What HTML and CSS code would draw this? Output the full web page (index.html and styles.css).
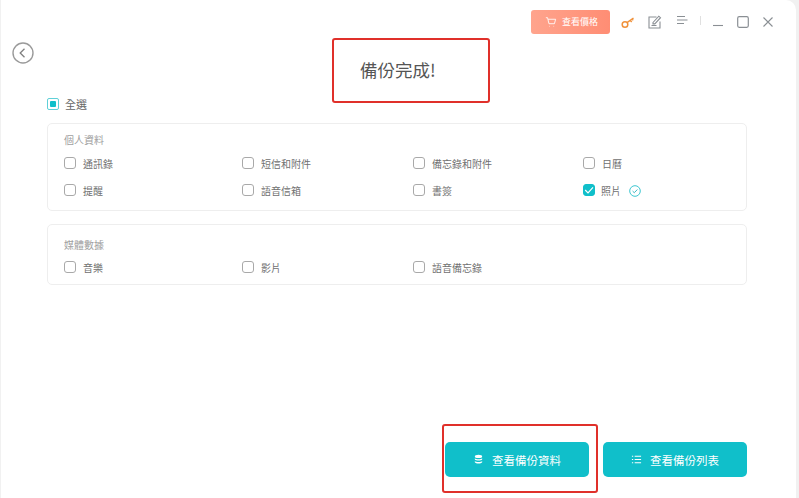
FILE: index.html
```html
<!DOCTYPE html>
<html lang="zh-Hant">
<head>
<meta charset="utf-8">
<title>備份完成</title>
<link rel="stylesheet" href="styles.css">
</head>
<body>
<div class="window">
  <header class="topbar">
    <button class="price"><svg class="cart" viewBox="0 0 14 14"><path d="M1 2h2l1.6 7h6.4l1.4-5.2H3.6M5 12h.6M10 12h.6" fill="none" stroke="#fff" stroke-width="1"/></svg>查看價格</button>
    <svg class="tool key" viewBox="0 0 14 14"><circle cx="4" cy="9.5" r="2.8" fill="none" stroke="#f0913a" stroke-width="1.5"/><path d="M6 7.6 12.5 3M9.3 5.2l1.4 1.7M11.2 3.9l1.1 1.3" fill="none" stroke="#f0913a" stroke-width="1.5"/></svg>
    <svg class="tool edit" viewBox="0 0 14 14"><path d="M8.5 2H1v11h11V6.5M3.5 10.5h5M5 7.5 10.8 1.2l1.7 1.5-5.7 6.2H5z" fill="none" stroke="#8a8f94" stroke-width="1.1"/></svg>
    <svg class="tool menu" viewBox="0 0 14 14"><path d="M2 2.5h8M2 6h10.5M2 9.5h7" fill="none" stroke="#8a8f94" stroke-width="1"/></svg>
    <span class="sep"></span>
    <svg class="win min" viewBox="0 0 12 12"><path d="M1 9.5h10" stroke="#8a8f94" stroke-width="1.1"/></svg>
    <svg class="win max" viewBox="0 0 12 12"><rect x=".7" y=".7" width="10.6" height="10.6" rx="1.5" fill="none" stroke="#8a8f94" stroke-width="1.2"/></svg>
    <svg class="win close" viewBox="0 0 12 12"><path d="M1.5 1.5l9 9M10.5 1.5l-9 9" stroke="#8a8f94" stroke-width="1.1"/></svg>
  </header>

  <div class="head">
    <svg class="back" viewBox="0 0 22 22"><circle cx="11" cy="11" r="10" fill="none" stroke="#9a9a9a" stroke-width="1.4"/><path d="M12.5 6.8 8.2 11l4.3 4.2" fill="none" stroke="#808080" stroke-width="1.3"/></svg>
    <h1 class="title">備份完成!</h1>
  </div>

  <label class="all"><span class="box partial"></span>全選</label>

  <section class="card personal">
    <h2>個人資料</h2>
    <div class="grid">
      <label class="item"><span class="box"></span>通訊錄</label>
      <label class="item"><span class="box"></span>短信和附件</label>
      <label class="item"><span class="box"></span>備忘錄和附件</label>
      <label class="item"><span class="box"></span>日曆</label>
      <label class="item"><span class="box"></span>提醒</label>
      <label class="item"><span class="box"></span>語音信箱</label>
      <label class="item"><span class="box"></span>書簽</label>
      <label class="item"><span class="box checked"><svg viewBox="0 0 12 12"><path d="M2.2 6 5 8.8 10 3.4" fill="none" stroke="#fff" stroke-width="1.2"/></svg></span>照片<svg class="done" viewBox="0 0 12 12"><circle cx="6" cy="6" r="5.3" fill="none" stroke="#3cc6d0" stroke-width="1"/><path d="M3.6 6.1 5.3 7.7 8.4 4.5" fill="none" stroke="#3cb8c4" stroke-width="1"/></svg></label>
    </div>
  </section>

  <section class="card media">
    <h2>媒體數據</h2>
    <div class="grid">
      <label class="item"><span class="box"></span>音樂</label>
      <label class="item"><span class="box"></span>影片</label>
      <label class="item"><span class="box"></span>語音備忘錄</label>
    </div>
  </section>

  <footer class="actions">
    <button class="action"><svg viewBox="0 0 12 12"><ellipse cx="6" cy="2.6" rx="4" ry="1.7" fill="#fff"/><path d="M2 4.6c1 1.5 7 1.5 8 0v1.4c-1 1.6-7 1.6-8 0zM2 7.6c1 1.5 7 1.5 8 0V9c-1 1.9-7 1.9-8 0z" fill="#fff"/></svg>查看備份資料</button>
    <button class="action"><svg viewBox="0 0 12 12"><path d="M1 2.5h1.4M1 6h1.4M1 9.5h1.4M4 2.5h7M4 6h7M4 9.5h7" stroke="#fff" stroke-width="1.1"/></svg>查看備份列表</button>
  </footer>

  <div class="mark mark-title"></div>
  <div class="mark mark-button"></div>
</div>
</body>
</html>
```
FILE: styles.css
```css
* { box-sizing: border-box; }
html, body { margin: 0; height: 100%; }
body {
  background: #f1f1f1;
  font-family: "Noto Sans CJK TC", "Noto Sans", sans-serif;
  color: #666;
  overflow: hidden;
}
.window {
  position: relative;
  width: 795px;
  height: 498px;
  margin-left: 1px;
  background: #fff;
  border-top-right-radius: 10px;
  display: flex;
  flex-direction: column;
}
.topbar {
  height: 34px;
  padding: 9px 0 0 530px;
  display: flex;
  align-items: center;
  flex: none;
}
.price {
  width: 79px;
  height: 24px;
  border: 0;
  border-radius: 3px;
  background: linear-gradient(90deg, #ffa48d, #ff8d74);
  color: #fff;
  font: 9px "Noto Sans CJK TC", sans-serif;
  display: flex;
  align-items: center;
  justify-content: center;
  gap: 5px;
  padding: 0 0 0 2px;
}
.cart { width: 12px; height: 12px; }
.tool { width: 14px; height: 14px; flex: none; }
.key { margin-left: 11px; }
.edit { margin-left: 13px; }
.menu { margin-left: 13px; margin-top: -2px; }
.sep { width: 1px; height: 9px; background: #e0e0e0; margin: -3px 0 0 11px; }
.win { width: 12px; height: 12px; flex: none; }
.min { margin-left: 11px; }
.max { margin-left: 13px; }
.close { margin-left: 13px; }
.head {
  height: 52px;
  padding-left: 11px;
  display: flex;
  align-items: flex-start;
  flex: none;
}
.back { width: 22px; height: 22px; margin-top: 8px; flex: none; }
.title {
  margin: 23px 0 0 326px;
  font-size: 17.5px;
  line-height: 26px;
  font-weight: 400;
  color: #555;
}
.all {
  height: 37px;
  margin-left: 46px;
  padding-top: 11px;
  display: flex;
  align-items: flex-start;
  font-size: 11px;
  line-height: 14px;
  color: #666;
  flex: none;
}
.box {
  width: 12px;
  height: 12px;
  margin-right: 7px;
  border: 1px solid #a9a9a9;
  border-radius: 3px;
  background: #fff;
  flex: none;
  display: flex;
  align-items: center;
  justify-content: center;
}
.box.partial { border-color: #5fd0d8; margin-top: 1px; margin-right: 6px; border-radius: 2px; }
.box.partial::after { content: ""; width: 6px; height: 6px; background: #10bfca; border-radius: 1px; }
.box.checked { background: #10bfca; border-color: #10bfca; margin-right: 6px; }
.box.checked svg { width: 12px; height: 12px; flex: none; }
.card {
  margin-left: 46px;
  width: 700px;
  border: 1px solid #eeeeee;
  border-radius: 5px;
  padding: 9px 0 0 16px;
  flex: none;
}
.personal { height: 88px; }
.media { height: 61px; margin-top: 13px; padding-top: 13px; }
.card h2 {
  margin: 0;
  font-size: 10px;
  line-height: 14px;
  font-weight: 400;
  color: #a0a0a0;
}
.grid {
  margin-top: 10px;
  display: grid;
  grid-template-columns: 178px 171px 170px 1fr;
  grid-auto-rows: 27px;
}
.media .grid { margin-top: 9px; }
.item {
  display: flex;
  align-items: flex-start;
  font-size: 10px;
  line-height: 14px;
  color: #707070;
}
.item .box { margin-top: 0; }
.done { width: 12px; height: 12px; margin-left: 8px; margin-top: 1px; }
.actions {
  margin-top: auto;
  height: 56px;
  padding-left: 444px;
  display: flex;
  gap: 14px;
  flex: none;
}
.action {
  width: 144px;
  height: 35px;
  border: 0;
  border-radius: 5px;
  background: #10bfca;
  color: #fff;
  font: 11.5px "Noto Sans CJK TC", sans-serif;
  display: flex;
  align-items: center;
  justify-content: center;
  gap: 8px;
  padding: 0;
}
.action svg { width: 11px; height: 11px; }
.mark {
  position: absolute;
  border: 2.5px solid #e0302a;
  border-radius: 3px;
}
.mark-title { left: 331px; top: 38px; width: 158px; height: 65px; }
.mark-button { left: 441px; top: 424px; width: 156px; height: 69px; }
```
